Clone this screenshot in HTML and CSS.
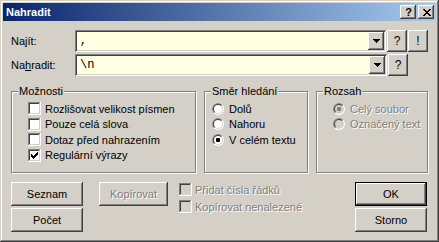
FILE: index.html
```html
<!DOCTYPE html>
<html>
<head>
<meta charset="utf-8">
<link rel="stylesheet" href="styles.css">
</head>
<body>
<svg class="defs" width="0" height="0">
  <symbol id="radio" viewBox="0 0 12 12">
    <circle cx="6" cy="6" r="6" fill="#fff"/>
    <path d="M1.757 10.243A6 6 0 0 1 10.243 1.757Z" fill="#808080"/>
    <circle cx="6" cy="6" r="5" fill="#D4D0C8"/>
    <path d="M2.464 9.536A5 5 0 0 1 9.536 2.464Z" fill="#404040"/>
    <circle cx="6" cy="6" r="4" fill="var(--fill, #fff)"/>
  </symbol>
</svg>
<div class="window">
  <div class="titlebar">
    <span class="title">Nahradit</span>
    <div class="tbtns">
      <span class="tbtn help">?</span>
      <span class="tbtn"><svg width="8" height="7" viewBox="0 0 8 7" shape-rendering="crispEdges"><path d="M0 0h2v1h1v1h2v-1h1v-1h2v1h-1v1h-1v1h-1v1h1v1h1v1h1v1h-2v-1h-1v-1h-2v1h-1v1h-2v-1h1v-1h1v-1h1v-1h-1v-1h-1v-1h-1z"/></svg></span>
    </div>
  </div>
  <div class="content">
    <div class="row">
      <span class="lbl">Najít:</span>
      <div class="combo"><span class="val">,</span><span class="drop"><svg width="7" height="4" viewBox="0 0 7 4" shape-rendering="crispEdges"><path d="M0 0h7v1h-1v1h-1v1h-1v1h-1v-1h-1v-1h-1v-1h-1z"/></svg></span></div>
      <span class="btn sq">?</span>
      <span class="btn sq">!</span>
    </div>
    <div class="row">
      <span class="lbl">Na<u>h</u>radit:</span>
      <div class="combo"><span class="val">\n</span><span class="drop"><svg width="7" height="4" viewBox="0 0 7 4" shape-rendering="crispEdges"><path d="M0 0h7v1h-1v1h-1v1h-1v1h-1v-1h-1v-1h-1v-1h-1z"/></svg></span></div>
      <span class="btn sq">?</span>
    </div>
    <div class="groups">
      <fieldset class="grp opts">
        <legend>Možnosti</legend>
        <div class="gbody">
          <div class="opt"><span class="cb"></span><span>Rozlišovat velikost písmen</span></div>
          <div class="opt"><span class="cb"></span><span>Pouze celá slova</span></div>
          <div class="opt"><span class="cb"></span><span>Dotaz před nahrazením</span></div>
          <div class="opt"><span class="cb"><svg width="7" height="7" viewBox="0 0 7 7" shape-rendering="crispEdges"><path d="M6 0h1v1h-1zM5 1h2v1h-2zM0 2h1v1h-1zM4 2h3v1h-3zM0 3h2v1h-2zM3 3h3v1h-3zM0 4h5v1h-5zM1 5h3v1h-3zM2 6h1v1h-1z"/></svg></span><span>Regulární výrazy</span></div>
        </div>
      </fieldset>
      <fieldset class="grp dir">
        <legend>Směr hledání</legend>
        <div class="gbody">
          <div class="opt"><span class="rb"><svg width="12" height="12"><use href="#radio"/></svg></span><span>Dolů</span></div>
          <div class="opt"><span class="rb"><svg width="12" height="12"><use href="#radio"/></svg></span><span>Nahoru</span></div>
          <div class="opt"><span class="rb on"><svg width="12" height="12"><use href="#radio"/></svg></span><span>V celém textu</span></div>
        </div>
      </fieldset>
      <fieldset class="grp range">
        <legend>Rozsah</legend>
        <div class="gbody">
          <div class="opt dis"><span class="rb on"><svg width="12" height="12"><use href="#radio"/></svg></span><span>Celý soubor</span></div>
          <div class="opt dis"><span class="rb"><svg width="12" height="12"><use href="#radio"/></svg></span><span>Označený text</span></div>
        </div>
      </fieldset>
    </div>
    <div class="bottom">
      <div class="col">
        <span class="btn wide">Seznam</span>
        <span class="btn wide">Počet</span>
      </div>
      <div class="col">
        <span class="btn copy dis">Kopírovat</span>
      </div>
      <div class="col checks">
        <div class="opt dis"><span class="cb"></span><span>Přidat čísla řádků</span></div>
        <div class="opt dis"><span class="cb"></span><span>Kopírovat nenalezené</span></div>
      </div>
      <div class="col right">
        <span class="btn wide default">OK</span>
        <span class="btn wide">Storno</span>
      </div>
    </div>
  </div>
</div>
</body>
</html>
```
FILE: styles.css
```css
* { box-sizing: border-box; }
body {
  margin: 0;
  background: #D4D0C8;
  font: 11px "Liberation Sans", Arial, sans-serif;
  color: #000;
}
.defs { position: absolute; width: 0; height: 0; }
.window {
  width: 439px;
  height: 242px;
  padding: 3px;
  background: #D4D0C8;
  box-shadow: inset -1px -1px #404040, inset 1px 1px #D4D0C8, inset -2px -2px #808080, inset 2px 2px #fff;
  display: flex;
  flex-direction: column;
}
.titlebar {
  height: 18px;
  display: flex;
  align-items: center;
  padding: 0 2px 0 3px;
  background: linear-gradient(to right, #0A246A, #A6CAF0);
  color: #fff;
  font-weight: bold;
}
.tbtns { margin-left: auto; display: flex; gap: 2px; }
.tbtn, .btn, .drop {
  background: #D4D0C8;
  box-shadow: inset -1px -1px #404040, inset 1px 1px #fff, inset -2px -2px #808080, inset 2px 2px #D4D0C8;
  display: flex;
  align-items: center;
  justify-content: center;
  color: #000;
}
.tbtn { width: 16px; height: 14px; font-weight: bold; font-size: 11px; line-height: 14px; padding-left: 1px; }
.content { padding: 9px 8px 0 8px; }
.row { display: flex; align-items: center; height: 22px; }
.row + .row { margin-top: 2px; }
.lbl { width: 64px; }
.combo {
  width: 312px;
  height: 22px;
  padding: 2px;
  background: #FFFFE1;
  box-shadow: inset 1px 1px #808080, inset -1px -1px #fff, inset 2px 2px #404040, inset -2px -2px #D4D0C8;
  display: flex;
}
.val { flex: 1; padding-left: 3px; font: 12px "Liberation Mono", "Courier New", monospace; line-height: 18px; }
.drop { width: 16px; height: 18px; }
.sq { width: 20px; height: 22px; margin-left: 1px; font-size: 12px; }
.groups { display: flex; gap: 8px; margin-top: 9px; }
.grp {
  margin: 0;
  padding: 0;
  height: 88px;
  min-width: 0;
  border: 1px solid #808080;
  box-shadow: 1px 1px 0 #fff, inset 1px 1px 0 #fff;
}
.grp legend {
  margin-left: 6px;
  padding: 0 1px;
  line-height: 13px;
  background: #D4D0C8;
}
.gbody { padding-top: 3px; }
.opts { width: 185px; }
.opts .gbody { padding-left: 16px; }
.dir { width: 104px; }
.dir .gbody { padding-left: 7px; }
.range { width: 112px; }
.range .gbody { padding-left: 16px; }
.opt { display: flex; align-items: center; height: 15.5px; gap: 4px; white-space: nowrap; }
.dir .opt, .range .opt { gap: 5px; }
.cb {
  width: 13px;
  height: 13px;
  flex: none;
  background: #fff;
  box-shadow: inset -1px -1px #fff, inset 1px 1px #808080, inset -2px -2px #D4D0C8, inset 2px 2px #404040;
  display: flex;
  align-items: center;
  justify-content: center;
}
.rb { width: 12px; height: 12px; flex: none; position: relative; display: block; }
.rb svg { display: block; }
.rb.on::after {
  content: "";
  position: absolute;
  left: 4px;
  top: 4px;
  width: 4px;
  height: 4px;
  background: #000;
  border-radius: 1px;
}
.dis { color: #808080; text-shadow: 1px 1px 0 #fff; }
.dis .cb { background: #D4D0C8; }
.dis .rb { --fill: #D4D0C8; }
.dis .rb.on::after { background: #808080; }
.bottom { display: flex; margin-top: 9px; }
.col { display: flex; flex-direction: column; gap: 2px; }
.btn.wide { width: 72px; height: 24px; }
.copy { width: 69px; height: 24px; margin-left: 16px; }
.checks { margin-left: 11px; gap: 2px; }
.checks .opt { height: 15px; gap: 3px; }
.right { margin-left: auto; margin-right: 1px; }
.btn.default {
  border: 1px solid #000;
  box-shadow: inset -1px -1px #404040, inset 1px 1px #fff, inset -2px -2px #808080;
}
```
